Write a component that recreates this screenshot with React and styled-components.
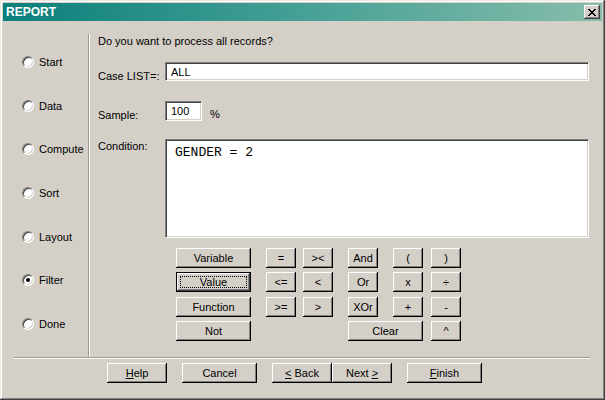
import styled, { createGlobalStyle } from "styled-components";

const GlobalStyle = createGlobalStyle`
  body {
    margin: 0;
    font-family: "Liberation Sans", Arial, sans-serif;
    font-size: 11px;
    color: #000;
    background: #d4d0c8;
  }
`;

const Window = styled.div`
  width: 605px;
  height: 400px;
  box-sizing: border-box;
  padding: 3px;
  background: #d4d0c8;
  box-shadow: inset -1px -1px #404040, inset 1px 1px #ece9e2,
    inset -2px -2px #808080, inset 2px 2px #fff;
  display: flex;
  flex-direction: column;
`;

const TitleBar = styled.div`
  height: 18px;
  display: flex;
  align-items: center;
  justify-content: space-between;
  padding-left: 3px;
  background: linear-gradient(90deg, #0b7f7b 0%, #3f9d93 45%, #86bdab 100%);
`;

const Title = styled.span`
  color: #fff;
  font-weight: bold;
  font-size: 12px;
`;

const CloseButton = styled.button`
  width: 16px;
  height: 14px;
  margin-right: 2px;
  padding: 0;
  border: none;
  background: #d4d0c8;
  display: flex;
  align-items: center;
  justify-content: center;
  box-shadow: inset -1px -1px #404040, inset 1px 1px #fff,
    inset -2px -2px #808080, inset 2px 2px #d4d0c8;
`;

const Body = styled.div`
  display: flex;
  margin-top: 13px;
  height: 323px;
`;

const Sidebar = styled.div`
  width: 86px;
  padding-top: 6px;
  box-sizing: border-box;
  border-right: 1px solid #a09a8c;
  box-shadow: 1px 0 #fff;
  display: flex;
  flex-direction: column;
`;

const RadioRow = styled.label`
  height: 43.7px;
  display: flex;
  align-items: center;
  gap: 5px;
  padding-left: 19px;
`;

const RadioDot = styled.span`
  width: 12px;
  height: 12px;
  box-sizing: border-box;
  border-radius: 50%;
  background: #fff;
  border: 1px solid;
  border-color: #808080 #fff #fff #808080;
  box-shadow: inset 1px 1px #404040, inset -1px -1px #d4d0c8;
  display: flex;
  align-items: center;
  justify-content: center;

  &::after {
    content: "";
    width: 4px;
    height: 4px;
    border-radius: 50%;
    background: ${(p) => (p.$checked ? "#000" : "transparent")};
  }
`;

const Main = styled.div`
  flex: 1;
  padding: 0 13px 0 8px;
  margin-left: 1px;
  display: flex;
  flex-direction: column;
`;

const Question = styled.div`
  line-height: 14px;
`;

const FieldRow = styled.div`
  display: flex;
  align-items: flex-start;
  height: ${(p) => p.$h}px;
  margin-top: ${(p) => p.$top}px;
`;

const FieldLabel = styled.div`
  width: 67px;
  flex: none;
  line-height: 13px;
  padding-top: ${(p) => p.$pad}px;
`;

const sunken = `
  box-sizing: border-box;
  background: #fff;
  border: 1px solid;
  border-color: #808080 #fff #fff #808080;
  box-shadow: inset 1px 1px #404040, inset -1px -1px #d4d0c8;
  outline: none;
`;

const TextInput = styled.input`
  ${sunken}
  width: ${(p) => p.$width || "100%"};
  height: ${(p) => p.$height}px;
  padding: 0 0 0 5px;
  font-family: "Liberation Sans", Arial, sans-serif;
  font-size: 11px;
  color: #000;
`;

const Percent = styled.span`
  margin-left: 8px;
  padding-top: 7px;
  line-height: 13px;
`;

const ConditionBox = styled.textarea`
  ${sunken}
  flex: 1;
  height: 99px;
  padding: 5px 9px;
  resize: none;
  overflow: hidden;
  font-family: "Liberation Mono", "Courier New", monospace;
  font-size: 13px;
  color: #000;
`;

const Keypad = styled.div`
  display: grid;
  grid-template-columns: 75px 15px 30px 7px 30px 15px 30px 15px 30px 8px 30px;
  grid-template-rows: repeat(4, 20px);
  row-gap: 4.3px;
  margin: 10px 0 0 78px;
`;

const Button = styled.button`
  position: relative;
  box-sizing: border-box;
  height: 20px;
  width: ${(p) => (p.$width ? `${p.$width}px` : "auto")};
  grid-column: ${(p) => p.$col || "auto"};
  padding: 0;
  border: none;
  background: #d4d0c8;
  font-family: "Liberation Sans", Arial, sans-serif;
  font-size: 11px;
  color: #000;
  box-shadow: ${(p) =>
    p.$default
      ? "inset 0 0 0 1px #000, inset -2px -2px #404040, inset 2px 2px #fff, inset -3px -3px #808080"
      : "inset -1px -1px #000, inset 1px 1px #fff, inset -2px -2px #808080, inset 2px 2px #d4d0c8"};

  &::after {
    content: "";
    display: ${(p) => (p.$default ? "block" : "none")};
    position: absolute;
    inset: 4px;
    border: 1px dotted #000;
  }

  u {
    text-decoration: underline;
    text-underline-offset: 1px;
  }
`;

const Divider = styled.div`
  margin: 0 12px 0 11px;
  height: 1px;
  background: #a09a8c;
  border-bottom: 1px solid #fff;
`;

const Footer = styled.div`
  display: flex;
  margin-top: 4px;
  padding-left: 104px;
`;

const FooterGroup = styled.div`
  display: flex;
  margin-right: 15px;
`;

const steps = ["Start", "Data", "Compute", "Sort", "Layout", "Filter", "Done"];

const keys = [
  { label: "Variable", col: "1" },
  { label: "=", col: "3" },
  { label: "><", col: "5" },
  { label: "And", col: "7" },
  { label: "(", col: "9" },
  { label: ")", col: "11" },
  { label: "Value", col: "1", def: true },
  { label: "<=", col: "3" },
  { label: "<", col: "5" },
  { label: "Or", col: "7" },
  { label: "x", col: "9" },
  { label: "÷", col: "11" },
  { label: "Function", col: "1" },
  { label: ">=", col: "3" },
  { label: ">", col: "5" },
  { label: "XOr", col: "7" },
  { label: "+", col: "9" },
  { label: "-", col: "11" },
  { label: "Not", col: "1" },
  { label: "Clear", col: "7 / span 3" },
  { label: "^", col: "11" },
];

export default function App() {
  return (
    <>
      <GlobalStyle />
      <Window>
        <TitleBar>
          <Title>REPORT</Title>
          <CloseButton aria-label="Close">
            <svg width="8" height="7" viewBox="0 0 8 7" shapeRendering="crispEdges">
              <path
                d="M0 0h2v1h1v1h2V1h1V0h2v1H7v1H6v1H5v1h1v1h1v1h1v1H6V6H5V5H3v1H2v1H0V6h1V5h1V4h1V3H2V2H1V1H0z"
                fill="#000"
              />
            </svg>
          </CloseButton>
        </TitleBar>

        <Body>
          <Sidebar>
            {steps.map((s) => (
              <RadioRow key={s}>
                <RadioDot $checked={s === "Filter"} />
                {s}
              </RadioRow>
            ))}
          </Sidebar>

          <Main>
            <Question>Do you want to process all records?</Question>

            <FieldRow $top={14} $h={19}>
              <FieldLabel $pad={8}>Case LIST=:</FieldLabel>
              <TextInput $height={19} value="ALL" readOnly />
            </FieldRow>

            <FieldRow $top={20} $h={20}>
              <FieldLabel $pad={8}>Sample:</FieldLabel>
              <TextInput $height={20} $width="37px" value="100" readOnly />
              <Percent>%</Percent>
            </FieldRow>

            <FieldRow $top={18} $h={99}>
              <FieldLabel $pad={1}>Condition:</FieldLabel>
              <ConditionBox value="GENDER = 2" readOnly />
            </FieldRow>

            <Keypad>
              {keys.map((k) => (
                <Button key={k.label} $col={k.col} $default={k.def}>
                  {k.label}
                </Button>
              ))}
            </Keypad>
          </Main>
        </Body>

        <Divider />

        <Footer>
          <FooterGroup>
            <Button $width={60}>
              <u>H</u>elp
            </Button>
          </FooterGroup>
          <FooterGroup>
            <Button $width={75}>Cancel</Button>
          </FooterGroup>
          <FooterGroup>
            <Button $width={60}>
              <u>&lt;</u> Back
            </Button>
            <Button $width={60}>
              Next <u>&gt;</u>
            </Button>
          </FooterGroup>
          <FooterGroup>
            <Button $width={75}>
              <u>F</u>inish
            </Button>
          </FooterGroup>
        </Footer>
      </Window>
    </>
  );
}
